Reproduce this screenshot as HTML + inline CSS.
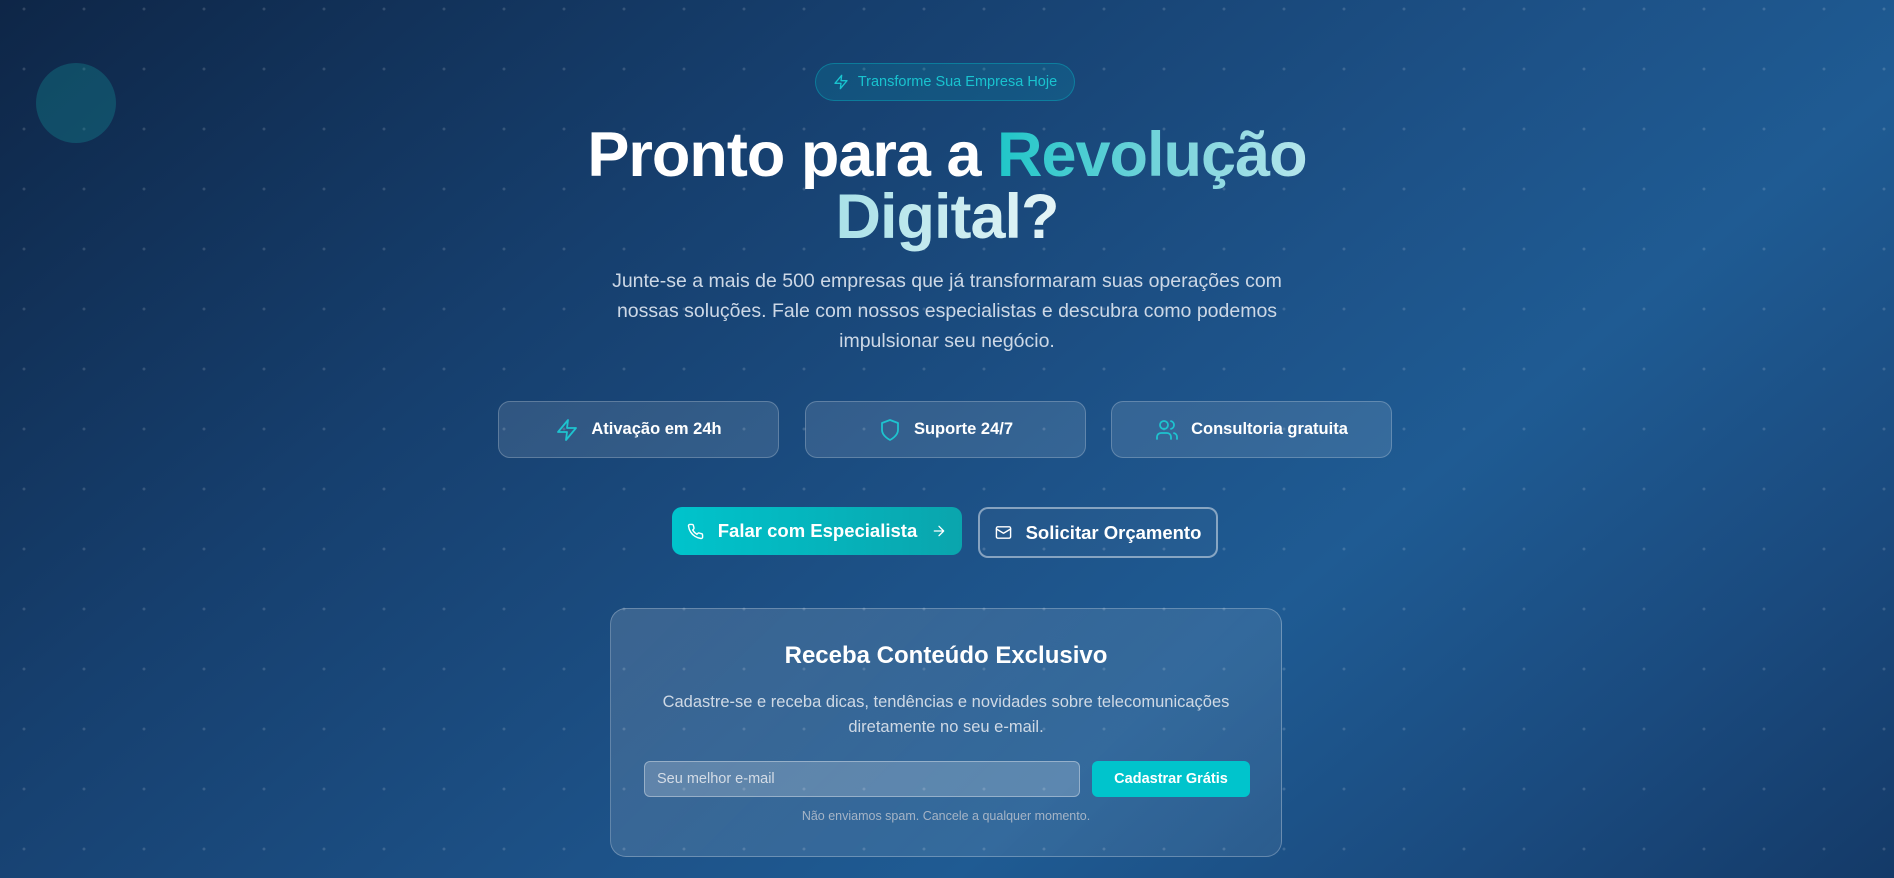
<!DOCTYPE html>
<html><head><meta charset="utf-8"><style>
*{box-sizing:border-box;margin:0;padding:0}
html,body{width:1894px;height:878px;overflow:hidden}
body{font-family:"Liberation Sans",sans-serif;color:#fff;position:relative;
background:linear-gradient(140deg,#0e2647 0%,#163f6e 30%,#1d5288 55%,#1f5b93 68%,#1a4a7e 85%,#143a68 100%);}
.dots{position:absolute;inset:0;background-image:radial-gradient(circle,rgba(255,255,255,.15) 1.3px,transparent 1.6px);background-size:60px 60px;background-position:-6px -21px}
.circle{position:absolute;left:36px;top:63px;width:80px;height:80px;border-radius:50%;background:rgba(20,140,150,.35)}
.c{position:absolute;left:0;width:1894px;text-align:center}
.badge{position:absolute;left:815px;top:63px;width:260px;height:38px;border-radius:19px;background:rgba(0,190,200,.15);border:1px solid rgba(0,200,210,.35);color:#19c3cf;font-size:14.5px;display:flex;align-items:center;justify-content:center;gap:9px}
h1{font-size:63px;font-weight:700;line-height:62px;letter-spacing:-1px}
.g{background:linear-gradient(90deg,#1fc6c8,#7fd5dd 60%,#b5e6ec);-webkit-background-clip:text;background-clip:text;color:transparent}
.g2{background:linear-gradient(90deg,#a9e1e8,#e6f5f7);-webkit-background-clip:text;background-clip:text;color:transparent}
p.lead{font-size:19.5px;line-height:30px;color:#cdd8e6;width:720px;margin:0 auto}
.feat{position:absolute;top:401px;width:281px;height:57px;border-radius:12px;background:rgba(255,255,255,.11);border:1px solid rgba(255,255,255,.22);display:flex;align-items:center;justify-content:center;gap:12px;font-size:16.5px;font-weight:700}
.btn{position:absolute;top:507px;height:48px;border-radius:10px;display:flex;align-items:center;justify-content:center;font-size:18.5px;font-weight:700;gap:14px}
.card{position:absolute;left:610px;top:608px;width:672px;height:249px;border-radius:16px;background:linear-gradient(135deg,rgba(255,255,255,.14),rgba(255,255,255,.07));border:1px solid rgba(255,255,255,.25)}
svg{flex:none}
</style></head><body>
<div class="dots"></div>
<div class="circle"></div>
<div class="badge"><svg width="16" height="16" viewBox="0 0 24 24" fill="none" stroke="#19c3cf" stroke-width="2" stroke-linecap="round" stroke-linejoin="round"><path d="M13 2 3 14h9l-1 8 10-12h-9l1-8z"/></svg>Transforme Sua Empresa Hoje</div>
<div class="c" style="top:124px"><h1>Pronto para a <span class="g">Revolução</span><br><span class="g2">Digital?</span></h1></div>
<div class="c" style="top:266px"><p class="lead">Junte-se a mais de 500 empresas que já transformaram suas operações com nossas soluções. Fale com nossos especialistas e descubra como podemos impulsionar seu negócio.</p></div>
<div class="feat" style="left:498px"><svg width="24" height="24" viewBox="0 0 24 24" fill="none" stroke="#1ec3cf" stroke-width="1.8" stroke-linecap="round" stroke-linejoin="round"><path d="M13 2 3 14h9l-1 8 10-12h-9l1-8z"/></svg>Ativação em 24h</div>
<div class="feat" style="left:805px"><svg width="24" height="24" viewBox="0 0 24 24" fill="none" stroke="#1ec3cf" stroke-width="1.8" stroke-linecap="round" stroke-linejoin="round"><path d="M12 22s8-4 8-10V5l-8-3-8 3v7c0 6 8 10 8 10z"/></svg>Suporte 24/7</div>
<div class="feat" style="left:1111px"><svg width="24" height="24" viewBox="0 0 24 24" fill="none" stroke="#1ec3cf" stroke-width="1.8" stroke-linecap="round" stroke-linejoin="round"><path d="M16 21v-2a4 4 0 0 0-4-4H6a4 4 0 0 0-4 4v2"/><circle cx="9" cy="7" r="4"/><path d="M22 21v-2a4 4 0 0 0-3-3.870M16 3.13a4 4 0 0 1 0 7.75"/></svg>Consultoria gratuita</div>
<div class="btn" style="left:672px;width:290px;background:linear-gradient(90deg,#00c4cc,#0aa5ad)"><svg width="17" height="17" viewBox="0 0 24 24" fill="none" stroke="#fff" stroke-width="2" stroke-linecap="round" stroke-linejoin="round"><path d="M22 16.9v3a2 2 0 0 1-2.2 2 19.8 19.8 0 0 1-8.6-3.1 19.5 19.5 0 0 1-6-6A19.8 19.8 0 0 1 2.1 4.2 2 2 0 0 1 4.1 2h3a2 2 0 0 1 2 1.7c.1 1 .4 1.9.7 2.8a2 2 0 0 1-.5 2.1L8 9.9a16 16 0 0 0 6 6l1.3-1.3a2 2 0 0 1 2.1-.4c.9.3 1.8.6 2.8.7a2 2 0 0 1 1.7 2z"/></svg>Falar com Especialista<svg width="16" height="16" viewBox="0 0 24 24" fill="none" stroke="#fff" stroke-width="2" stroke-linecap="round" stroke-linejoin="round"><path d="M5 12h14M12 5l7 7-7 7"/></svg></div>
<div class="btn" style="left:978px;width:240px;height:51px;border:2px solid rgba(255,255,255,.45);background:rgba(255,255,255,.03)"><svg width="17" height="17" viewBox="0 0 24 24" fill="none" stroke="#fff" stroke-width="2" stroke-linecap="round" stroke-linejoin="round"><rect x="2" y="4" width="20" height="16" rx="2"/><path d="m22 7-10 6L2 7"/></svg>Solicitar Orçamento</div>
<div class="card">
<div style="position:absolute;top:33px;width:100%;text-align:center;font-size:24px;font-weight:700">Receba Conteúdo Exclusivo</div>
<div style="position:absolute;top:81px;width:100%;text-align:center;font-size:16.5px;line-height:25px;color:#cfd9e5">Cadastre-se e receba dicas, tendências e novidades sobre telecomunicações<br>diretamente no seu e-mail.</div>
<div style="position:absolute;left:33px;top:152px;width:436px;height:36px;border-radius:6px;background:rgba(255,255,255,.2);border:1px solid rgba(255,255,255,.35);font-size:14.5px;color:#d4dce6;padding:9px 12px">Seu melhor e-mail</div>
<div style="position:absolute;left:481px;top:152px;width:158px;height:36px;border-radius:6px;background:#00c4cc;font-size:14.5px;font-weight:700;display:flex;align-items:center;justify-content:center">Cadastrar Grátis</div>
<div style="position:absolute;top:200px;width:100%;text-align:center;font-size:12.5px;color:#a5b4c6">Não enviamos spam. Cancele a qualquer momento.</div>
</div>
</body></html>
